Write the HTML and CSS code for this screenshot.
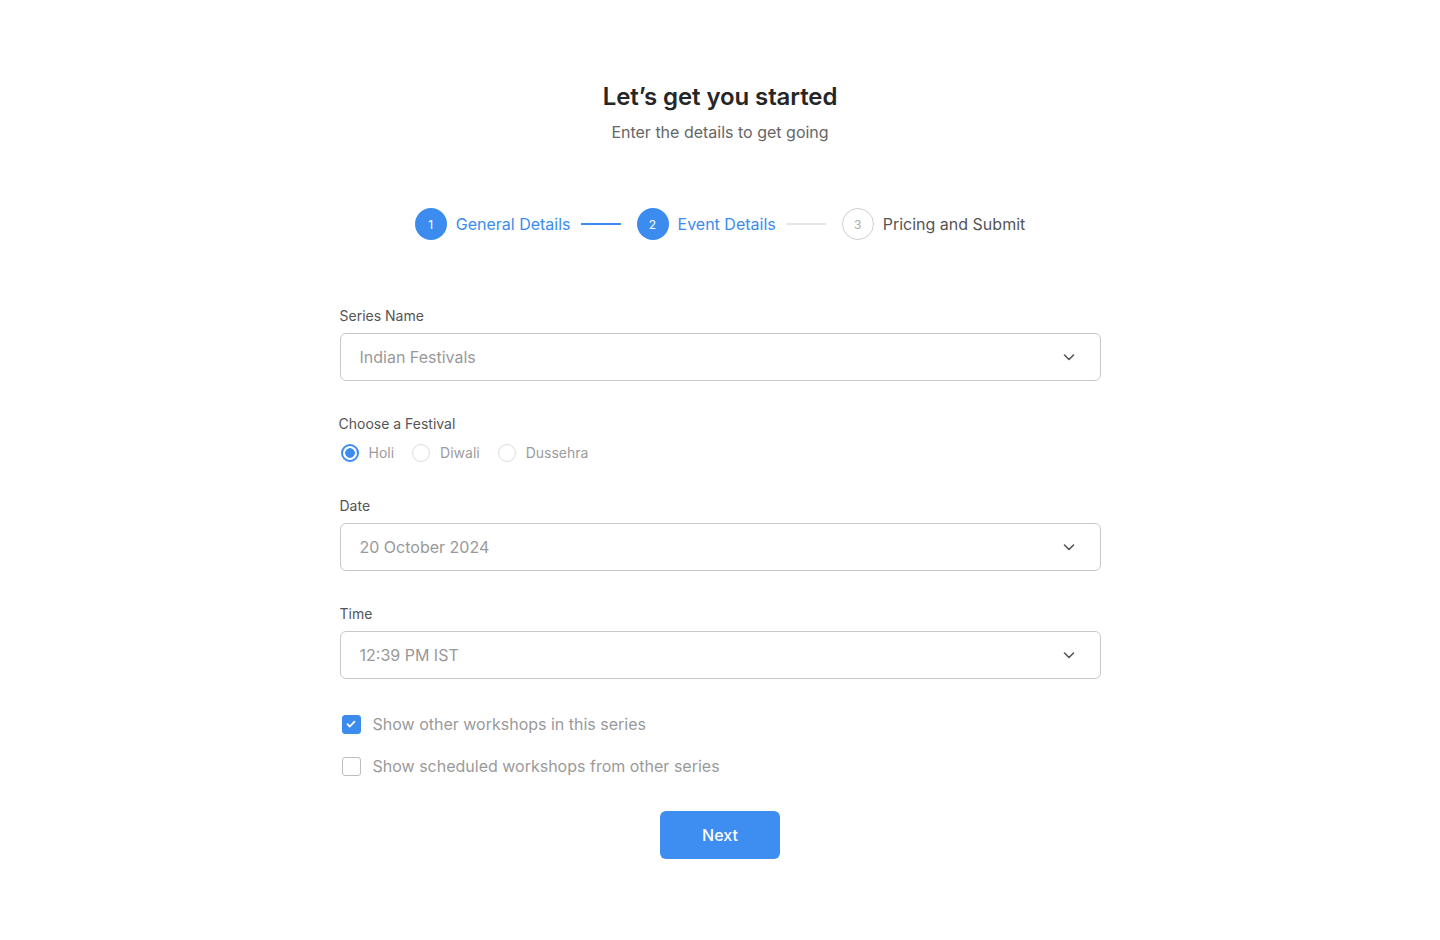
FILE: index.html
```html
<!DOCTYPE html>
<html lang="en">
<head>
<meta charset="utf-8">
<title>Let's get you started</title>
<link rel="stylesheet" href="styles.css">
</head>
<body>
<main class="page">
  <header class="intro">
    <h1 class="title">Let’s get you started</h1>
    <p class="subtitle">Enter the details to get going</p>
  </header>

  <nav class="stepper">
    <div class="step done"><span class="step-num">1</span><span class="step-label">General Details</span></div>
    <span class="step-line active"></span>
    <div class="step done"><span class="step-num">2</span><span class="step-label">Event Details</span></div>
    <span class="step-line"></span>
    <div class="step todo"><span class="step-num">3</span><span class="step-label">Pricing and Submit</span></div>
  </nav>

  <form class="form">
    <div class="field">
      <label class="label">Series Name</label>
      <div class="select"><span>Indian Festivals</span>
        <svg class="chev" width="14" height="14" viewBox="0 0 14 14"><path d="M2.5 5l4.5 4.5L11.5 5" fill="none" stroke="#555" stroke-width="1.6" stroke-linecap="round" stroke-linejoin="round"/></svg>
      </div>
    </div>

    <div class="field festival">
      <label class="label">Choose a Festival</label>
      <div class="radios">
        <span class="radio checked"><span class="dot"></span>Holi</span>
        <span class="radio"><span class="dot"></span>Diwali</span>
        <span class="radio"><span class="dot"></span>Dussehra</span>
      </div>
    </div>

    <div class="field date">
      <label class="label">Date</label>
      <div class="select"><span>20 October 2024</span>
        <svg class="chev" width="14" height="14" viewBox="0 0 14 14"><path d="M2.5 5l4.5 4.5L11.5 5" fill="none" stroke="#555" stroke-width="1.6" stroke-linecap="round" stroke-linejoin="round"/></svg>
      </div>
    </div>

    <div class="field">
      <label class="label">Time</label>
      <div class="select"><span>12:39 PM IST</span>
        <svg class="chev" width="14" height="14" viewBox="0 0 14 14"><path d="M2.5 5l4.5 4.5L11.5 5" fill="none" stroke="#555" stroke-width="1.6" stroke-linecap="round" stroke-linejoin="round"/></svg>
      </div>
    </div>

    <div class="checks">
      <div class="check on"><span class="box"><svg width="12" height="12" viewBox="0 0 12 12"><path d="M2.5 6.2l2.3 2.3L9.5 3.6" fill="none" stroke="#fff" stroke-width="1.8" stroke-linecap="round" stroke-linejoin="round"/></svg></span>Show other workshops in this series</div>
      <div class="check"><span class="box"></span>Show scheduled workshops from other series</div>
    </div>

    <div class="actions"><button type="button" class="btn">Next</button></div>
  </form>
</main>
</body>
</html>
```

FILE: styles.css
```css
* { box-sizing: border-box; }
html, body { margin: 0; background: #fff; }
body { font-family: Inter, "Noto Sans", sans-serif; color: #333; }

.page { width: 761px; margin: 0 auto; padding-top: 81px; }

.intro { text-align: center; }
.title { margin: 0; font-size: 24px; line-height: 32px; font-weight: 600; color: #262626; letter-spacing: -0.1px; }
.subtitle { margin: 8px 0 0; font-size: 16px; line-height: 22px; color: #666; }

.stepper { display: flex; align-items: center; justify-content: center; margin-top: 65px; }
.step { display: flex; align-items: center; gap: 9px; }
.step-num { width: 32px; height: 32px; border-radius: 50%; display: flex; align-items: center; justify-content: center; font-size: 12px; }
.step-label { font-size: 16px; line-height: 22px; }
.step.done .step-num { background: #3b8cee; color: #fff; }
.step.done .step-label { color: #3b8cee; }
.step.todo .step-num { border: 1px solid #cfcfcf; color: #aaa; }
.step.todo .step-label { color: #555; }
.step-line { width: 40px; height: 2px; background: #e6e6e6; margin: 0 16px 0 10px; }
.step-line.active { background: #3b8cee; }

.form { margin-top: 66px; }
.field { display: flex; flex-direction: column; margin-bottom: 32px; }
.label { font-size: 14px; line-height: 20px; color: #555; margin-bottom: 7px; }
.select { height: 48px; border: 1px solid #c8c8c8; border-radius: 6px; display: flex; align-items: center; justify-content: space-between; padding: 0 24px 0 19px; font-size: 16px; color: #999; }
.chev { display: block; }

.festival { padding-top: 1px; margin-bottom: 33px; }
.festival .label { margin-left: -1px; margin-bottom: 9px; }
.radios { display: flex; gap: 17px; }
.radio { display: flex; align-items: center; gap: 10px; font-size: 14px; line-height: 20px; color: #9c9c9c; }
.dot { width: 18px; height: 18px; border-radius: 50%; border: 1px solid #dcdcdc; margin-left: 1px; }
.radio.checked .dot { border: 2px solid #3b8cee; background: radial-gradient(circle, #3b8cee 0 4.5px, #fff 5px); }

.date { margin-bottom: 33px; }

.checks { display: flex; flex-direction: column; gap: 20px; padding-top: 2px; }
.check { display: flex; align-items: center; gap: 12px; font-size: 16px; line-height: 22px; color: #9a9a9a; }
.box { width: 19px; height: 19px; border-radius: 3px; border: 1.5px solid #bdbdbd; margin-left: 2px; display: flex; align-items: center; justify-content: center; }
.check.on .box { background: #3b8cee; border-color: #3b8cee; }

.actions { display: flex; justify-content: center; margin-top: 34px; }
.btn { width: 120px; height: 48px; border: 0; border-radius: 6px; background: #3d8ef0; color: #fff; font-family: inherit; font-size: 16px; font-weight: 500; cursor: pointer; }
```
